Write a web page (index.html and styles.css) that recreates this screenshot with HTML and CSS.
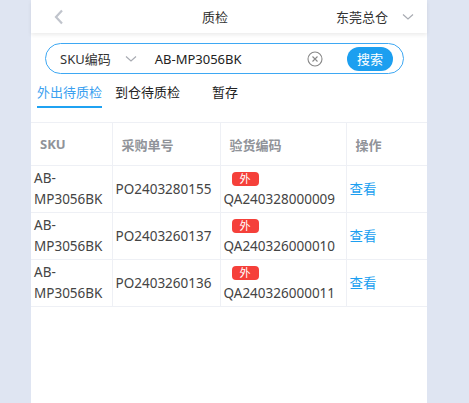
FILE: index.html
```html
<!DOCTYPE html>
<html lang="zh">
<head>
<meta charset="utf-8">
<link rel="stylesheet" href="styles.css">
</head>
<body>
<div class="panel">
  <header class="topbar">
    <span class="back"><svg width="12" height="16" viewBox="0 0 12 16"><path d="M9 1.5 L3 8 L9 14.5" fill="none" stroke="#c0c4cc" stroke-width="2.2"/></svg></span>
    <span class="title">质检</span>
    <span class="store">东莞总仓</span>
    <span class="store-arrow"><svg width="12" height="8" viewBox="0 0 12 8"><path d="M1 1.5 L6 6 L11 1.5" fill="none" stroke="#a8abb2" stroke-width="1.2"/></svg></span>
  </header>
  <div class="search">
    <span class="field">SKU编码</span>
    <span class="field-arrow"><svg width="12" height="8" viewBox="0 0 12 8"><path d="M1 1.5 L6 6 L11 1.5" fill="none" stroke="#a8abb2" stroke-width="1.2"/></svg></span>
    <span class="query">AB-MP3056BK</span>
    <span class="clear"><svg width="16" height="16" viewBox="0 0 16 16"><circle cx="8" cy="8" r="7" fill="none" stroke="#888" stroke-width="1.1"/><path d="M5.5 5.5 L10.5 10.5 M10.5 5.5 L5.5 10.5" stroke="#888" stroke-width="1.1"/></svg></span>
    <span class="btn">搜索</span>
  </div>
  <nav class="tabs">
    <span class="tab active">外出待质检</span>
    <span class="tab">到仓待质检</span>
    <span class="tab tab-last">暂存</span>
  </nav>
  <table class="grid">
    <colgroup><col class="c1"><col class="c2"><col class="c3"><col class="c4"></colgroup>
    <thead>
      <tr><th>SKU</th><th>采购单号</th><th>验货编码</th><th>操作</th></tr>
    </thead>
    <tbody>
      <tr><td>AB-<br>MP3056BK</td><td>PO2403280155</td><td><span class="tag">外</span><br>QA240328000009</td><td><span class="link">查看</span></td></tr>
      <tr><td>AB-<br>MP3056BK</td><td>PO2403260137</td><td><span class="tag">外</span><br>QA240326000010</td><td><span class="link">查看</span></td></tr>
      <tr><td>AB-<br>MP3056BK</td><td>PO2403260136</td><td><span class="tag">外</span><br>QA240326000011</td><td><span class="link">查看</span></td></tr>
    </tbody>
  </table>
</div>
</body>
</html>
```
FILE: styles.css
```css
html, body {
  margin: 0;
  padding: 0;
  height: 100%;
}
body {
  background: #dfe5f2;
  font-family: "Noto Sans", "Noto Sans CJK SC", sans-serif;
  color: #333;
  overflow: hidden;
}
.panel {
  margin-left: 31px;
  width: 396px;
  height: 403px;
  background: #fff;
}
.topbar {
  height: 33px;
  display: flex;
  align-items: center;
  box-shadow: 0 2px 4px rgba(0,0,0,0.08);
  font-size: 13px;
  color: #333;
  position: relative;
  white-space: nowrap;
}
.back {
  margin-left: 22px;
  display: flex;
  width: 12px;
}
.title {
  margin-left: 137px;
  width: 40px;
}
.store {
  margin-left: 94px;
}
.store-arrow {
  margin-left: 14px;
  display: flex;
}
.search {
  margin: 10px 0 0 14px;
  width: 357px;
  height: 29px;
  border: 1px solid #3ea8f3;
  border-radius: 16px;
  display: flex;
  align-items: center;
  font-size: 13px;
  color: #333;
}
.field {
  margin-left: 14px;
}
.field-arrow {
  display: flex;
  margin-left: 14px;
}
.query {
  margin-left: 18px;
  flex: 1;
  color: #222;
}
.clear {
  display: flex;
  margin-right: 24px;
}
.btn {
  background: #1c9ff0;
  color: #fff;
  border-radius: 12px;
  width: 46px;
  height: 24px;
  display: flex;
  align-items: center;
  justify-content: center;
  margin-right: 10px;
  font-size: 13px;
}
.tabs {
  display: flex;
  margin: 6px 0 0 6px;
  font-size: 13px;
  height: 32px;
}
.tab {
  padding-top: 2px;
  height: 24px;
  margin-right: 13px;
  color: #222;
}
.tab.active {
  color: #3a9ff0;
  border-bottom: 2px solid #1fa2f2;
}
.tab-last {
  margin-left: 19px;
}
.grid {
  margin-top: 10px;
  width: 396px;
  border-collapse: collapse;
  table-layout: fixed;
  font-size: 13.5px;
}
.c1 { width: 81px; }
.c2 { width: 108px; }
.c3 { width: 126px; }
.c4 { width: 81px; }
.grid th, .grid td {
  border: 1px solid #eef0f5;
}
.grid tr > :first-child { border-left: none; }
.grid tr > :last-child { border-right: none; }
.grid th {
  height: 42px;
  text-align: left;
  padding: 0 0 0 9px;
  color: #909399;
  font-weight: bold;
  font-size: 13px;
}
.grid td {
  height: 46px;
  padding: 0 0 0 3px;
  color: #444;
  line-height: 21px;
  vertical-align: middle;
}
.tag {
  display: inline-block;
  margin-left: 8px;
  background: #f5403a;
  color: #fff;
  border-radius: 4px;
  width: 27px;
  height: 14px;
  line-height: 14px;
  text-align: center;
  font-size: 11px;
  vertical-align: middle;
}
.link {
  color: #1c9ff0;
}
```
